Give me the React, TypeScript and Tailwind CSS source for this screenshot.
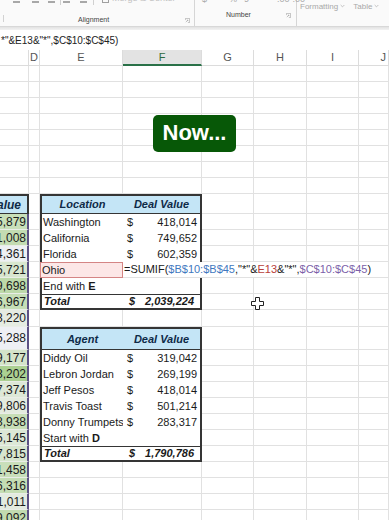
import React from "react";

const W = {
  c: "w-[29px]",
  d: "w-[11px]",
  e: "w-[83px]",
  f: "w-[79px]",
  g: "w-[52px]",
  h: "w-[53px]",
  i: "w-[52px]",
  j: "w-[30px]",
};

const grid = "shrink-0 border-r border-b border-[#e1e1e1]";
const dark = "border-[#353535]";
const headBg = "bg-[#c4e5f6]";
const headTxt = "font-bold italic text-[#0e2a47]";

type CV = { t: string; bg: string };

const cVals: CV[] = [
  { t: "365,879", bg: "bg-[#c8dfb9]" },
  { t: "291,008", bg: "bg-[#c3dcb2]" },
  { t: "124,361", bg: "bg-[#edf0f3]" },
  { t: "245,721", bg: "bg-[#d8e6cf]" },
  { t: "389,698", bg: "bg-[#bdd9aa]" },
  { t: "346,967", bg: "bg-[#c6deb6]" },
  { t: "198,220", bg: "bg-[#e5ece2]" },
  { t: "145,288", bg: "bg-[#eef0f4]" },
  { t: "219,177", bg: "bg-[#d4e4ca]" },
  { t: "438,202", bg: "bg-[#abd092]" },
  { t: "177,374", bg: "bg-[#dde8d7]" },
  { t: "189,806", bg: "bg-[#e3ebdf]" },
  { t: "338,938", bg: "bg-[#c7deb7]" },
  { t: "185,145", bg: "bg-[#dce8d6]" },
  { t: "217,815", bg: "bg-[#d6e5cd]" },
  { t: "341,458", bg: "bg-[#c9dfba]" },
  { t: "356,316", bg: "bg-[#c4ddb4]" },
  { t: "171,011", bg: "bg-[#e3ebe0]" },
  { t: "369,092", bg: "bg-[#c2dbb0]" },
];

function CCell({ c }: { c?: number | "head" }) {
  if (c === undefined) return <div className={`${W.c} ${grid}`} />;
  if (c === "head")
    return (
      <div
        className={`${W.c} shrink-0 ${headBg} border-t-2 border-r-2 border-b ${dark} overflow-hidden flex items-center justify-end pr-[6px] whitespace-nowrap text-[12px] ${headTxt}`}
      >
        <span className="shrink-0">Deal Value</span>
      </div>
    );
  const v = cVals[c];
  return (
    <div
      className={`${W.c} shrink-0 ${v.bg} border-r-2 border-r-[#5d5185] border-b border-b-[#e9ede7] overflow-hidden flex items-center justify-end pr-[1px] whitespace-nowrap text-[12px]`}
    >
      <span className="shrink-0">{v.t}</span>
    </div>
  );
}

function Rest() {
  return (
    <>
      <div className={`${W.g} ${grid}`} />
      <div className={`${W.h} ${grid}`} />
      <div className={`${W.i} ${grid}`} />
      <div className={`${W.j} ${grid}`} />
    </>
  );
}

function Row({
  h,
  c,
  children,
  rest = true,
}: {
  h: string;
  c?: number | "head";
  children?: React.ReactNode;
  rest?: boolean;
}) {
  return (
    <div className={`flex ${h}`}>
      <CCell c={c} />
      <div className={`${W.d} ${grid}`} />
      {children ?? (
        <>
          <div className={`${W.e} ${grid}`} />
          <div className={`${W.f} ${grid}`} />
        </>
      )}
      {rest && <Rest />}
    </div>
  );
}

function HeadCells({ a, top }: { a: string; top: boolean }) {
  return (
    <>
      <div
        className={`${W.e} shrink-0 ${headBg} ${top ? "border-t-2" : ""} border-l-2 border-b ${dark} flex items-center justify-center ${headTxt}`}
      >
        {a}
      </div>
      <div
        className={`${W.f} shrink-0 ${headBg} ${top ? "border-t-2" : ""} border-r-2 border-b ${dark} flex items-center justify-center ${headTxt}`}
      >
        Deal Value
      </div>
    </>
  );
}

function DataCells({ name, amt }: { name: React.ReactNode; amt?: string }) {
  return (
    <>
      <div
        className={`${W.e} shrink-0 bg-white border-l-2 ${dark} flex items-center pl-[1px] whitespace-nowrap`}
      >
        {name}
      </div>
      <div
        className={`${W.f} shrink-0 bg-white border-r-2 ${dark} flex items-center justify-between pl-[4px] pr-[3px]`}
      >
        {amt && (
          <>
            <span>$</span>
            <span>{amt}</span>
          </>
        )}
      </div>
    </>
  );
}

function TotalCells({ amt }: { amt: string }) {
  return (
    <>
      <div
        className={`${W.e} shrink-0 bg-white border-l-2 border-t border-b-2 ${dark} flex items-center pl-[2px] font-bold italic`}
      >
        Total
      </div>
      <div
        className={`${W.f} shrink-0 bg-white border-r-2 border-t border-b-2 ${dark} flex items-center justify-between pl-[6px] pr-[6px] font-bold italic`}
      >
        <span>$</span>
        <span>{amt}</span>
      </div>
    </>
  );
}

function Chevron({ className }: { className?: string }) {
  return (
    <svg viewBox="0 0 6 4" className={className} fill="none" stroke="currentColor" strokeWidth="0.8">
      <path d="M0.8 0.8 L3 3 L5.2 0.8" />
    </svg>
  );
}

function Launcher() {
  return (
    <svg viewBox="0 0 6 6" className="w-[5px] h-[5px] text-[#9a9a9a]" fill="none" stroke="currentColor" strokeWidth="0.7">
      <path d="M0.5 2.5 V0.5 H5.5 V5.5 H3.5" />
      <path d="M1 5 L3.5 2.5 M3.5 2.5 H2.2 M3.5 2.5 V3.8" />
    </svg>
  );
}

function Ribbon() {
  const bar = "h-[2px] w-[7px] bg-[#a8a8a8] shrink-0";
  return (
    <div className="h-[27px] flex bg-[#fafafa] border-b border-[#d8d8d8] overflow-hidden">
      <div className="w-[4px] shrink-0 flex flex-col">
        <div className="h-[15px]" />
        <div className="h-[7px] border-r border-[#d2d2d2]" />
      </div>
      {/* Alignment */}
      <div className="w-[191px] shrink-0 flex flex-col border-r border-[#d6d6d6]">
        <div className="h-[15px] flex items-start">
          <div className={`${bar} ml-[9px] mt-[1px]`} />
          <div className={`${bar} ml-[12px] mt-[1px]`} />
          <div className={`${bar} ml-[9px] mt-[1px]`} />
          <div className="w-px h-[5px] bg-[#d0d0d0] ml-[5px]" />
          <div className={`${bar} ml-[2px] mt-[1px]`} />
          <div className={`${bar} ml-[10px] mt-[1px]`} />
          <div className="w-px h-[5px] bg-[#d0d0d0] ml-[6px]" />
          <div className="w-[7px] h-[3px] border-x border-b border-[#a0a0a0] ml-[8px]" />
          <div className="ml-[3px] -mt-[7px] text-[9px] leading-[10px] text-[#c2c2c2] whitespace-nowrap">
            Merge &amp; Center
          </div>
        </div>
        <div className="h-[12px] flex items-center">
          <span className="ml-[74px] text-[7px] text-[#444]">Alignment</span>
          <div className="ml-auto mr-[4px]">
            <Launcher />
          </div>
        </div>
      </div>
      {/* Number */}
      <div className="w-[102px] shrink-0 flex flex-col border-r border-[#d6d6d6]">
        <div className="h-[15px] flex items-start text-[9px] leading-[10px] text-[#a8a8a8] -mt-[6px] whitespace-nowrap">
          <span className="ml-[7px]">$</span>
          <span className="ml-[22px]">%</span>
          <span className="ml-[7px]">9</span>
          <span className="ml-[10px] w-px h-[10px] bg-[#d0d0d0]" />
          <span className="ml-[18px]">.00</span>
          <span className="ml-[3px]">.00</span>
        </div>
        <div className="h-[12px] flex items-center">
          <span className="ml-[31px] text-[7px] text-[#444]">Number</span>
          <div className="ml-auto mr-[5px]">
            <Launcher />
          </div>
        </div>
      </div>
      {/* Styles */}
      <div className="flex-1 flex items-start pt-[1px] text-[8px] text-[#a8a8a8] whitespace-nowrap">
        <span className="ml-[3px]">Formatting</span>
        <Chevron className="w-[5px] h-[4px] ml-[2px] mt-[3px]" />
        <span className="ml-[8px]">Table</span>
        <Chevron className="w-[5px] h-[4px] ml-[2px] mt-[3px]" />
      </div>
    </div>
  );
}

function ColHeaders() {
  const base = "shrink-0 border-r border-b border-[#dcdcdc] flex items-center justify-center";
  return (
    <div className="h-[16px] flex bg-white text-[11px] text-[#555]">
      <div className={`${W.c} ${base}`} />
      <div className={`${W.d} ${base}`}>D</div>
      <div className={`${W.e} ${base}`}>E</div>
      <div
        className={`${W.f} shrink-0 border-r border-[#dcdcdc] bg-[#e3e3e3] border-b-2 border-b-[#2a7148] flex items-center justify-center text-[#2c6a3f]`}
      >
        F
      </div>
      <div className={`${W.g} ${base}`}>G</div>
      <div className={`${W.h} ${base}`}>H</div>
      <div className={`${W.i} ${base}`}>I</div>
      <div className={`${W.j} ${base} justify-end pr-[2px]`}>J</div>
    </div>
  );
}

export default function App() {
  const r16 = "h-[16px]";
  return (
    <div className="relative w-[389px] h-[520px] overflow-hidden bg-white font-['Liberation_Sans',Arial,sans-serif] text-[#1a1a1a]">
      <Ribbon />
      <div className="h-[3px] bg-linear-to-b from-[#e2e2e2] to-[#f3f3f3]" />
      <div className="h-[20px] bg-white flex items-center pl-[1px] text-[10px] text-[#222] whitespace-nowrap">
        *"&amp;E13&amp;"*",$C$10:$C$45)
      </div>
      <ColHeaders />

      <div className="text-[11px] leading-none">
        <Row h={r16} />
        <Row h={r16} />
        <Row h={r16} />
        <Row h={r16} />
        <Row h={r16} />
        <Row h={r16} />
        <Row h={r16} />
        <Row h={r16} />

        {/* Table 1 */}
        <Row h="h-[20px]" c="head">
          <HeadCells a="Location" top />
        </Row>
        <Row h={r16} c={0}>
          <DataCells name="Washington" amt="418,014" />
        </Row>
        <Row h={r16} c={1}>
          <DataCells name="California" amt="749,652" />
        </Row>
        <Row h={r16} c={2}>
          <DataCells name="Florida" amt="602,359" />
        </Row>
        <Row h={r16} c={3} rest={false}>
          <div
            className={`${W.e} shrink-0 bg-[#fce7e7] border-[1.5px] border-[#d48585] flex items-center pl-[1px]`}
          >
            Ohio
          </div>
          <div className="w-[249px] shrink-0 bg-white flex items-center pl-[1px] whitespace-nowrap border-b border-[#e1e1e1]">
            <span>=SUMIF(</span>
            <span className="text-[#3f78c0]">$B$10:$B$45</span>
            <span>,"*"&amp;</span>
            <span className="text-[#b8403a]">E13</span>
            <span>&amp;"*",</span>
            <span className="text-[#7b5fa9]">$C$10:$C$45</span>
            <span>)</span>
            <span className="w-px h-[13px] bg-[#222] ml-[1px]" />
          </div>
          <div className={`w-[17px] ${grid}`} />
        </Row>
        <Row h={r16} c={4}>
          <DataCells
            name={
              <>
                End with&nbsp;<b>E</b>
              </>
            }
          />
        </Row>
        <Row h={r16} c={5}>
          <TotalCells amt="2,039,224" />
        </Row>

        <Row h="h-[17px]" c={6} />

        {/* Table 2 */}
        <Row h="h-[23px]" c={7}>
          <HeadCells a="Agent" top />
        </Row>
        <Row h={r16} c={8}>
          <DataCells name="Diddy Oil" amt="319,042" />
        </Row>
        <Row h={r16} c={9}>
          <DataCells name="Lebron Jordan" amt="269,199" />
        </Row>
        <Row h={r16} c={10}>
          <DataCells name="Jeff Pesos" amt="418,014" />
        </Row>
        <Row h={r16} c={11}>
          <DataCells name="Travis Toast" amt="501,214" />
        </Row>
        <Row h={r16} c={12}>
          <DataCells name="Donny Trumpets" amt="283,317" />
        </Row>
        <Row h={r16} c={13}>
          <DataCells
            name={
              <>
                Start with&nbsp;<b>D</b>
              </>
            }
          />
        </Row>
        <Row h={r16} c={14}>
          <TotalCells amt="1,790,786" />
        </Row>
        <Row h={r16} c={15} />
        <Row h={r16} c={16} />
        <Row h={r16} c={17} />
        <Row h={r16} c={18} />
      </div>

      {/* Overlay badge */}
      <div className="absolute left-[153px] top-[115px] w-[83px] h-[37px] rounded-[5px] bg-[#075807] flex items-center justify-center text-white font-bold text-[22px] leading-none pb-[2px]">
        Now...
      </div>

      {/* Mouse cursor */}
      <svg
        className="absolute left-[251px] top-[297px] w-[13px] h-[13px]"
        viewBox="0 0 13 13"
      >
        <path
          d="M4.5 0.5 H8.5 V4.5 H12.5 V8.5 H8.5 V12.5 H4.5 V8.5 H0.5 V4.5 H4.5 Z"
          fill="white"
          stroke="#222"
          strokeWidth="1"
        />
      </svg>
    </div>
  );
}
